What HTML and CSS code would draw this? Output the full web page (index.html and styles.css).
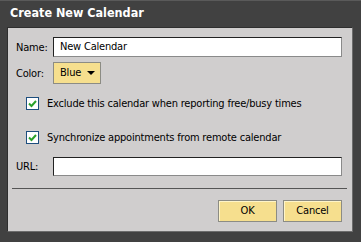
FILE: index.html
```html
<!DOCTYPE html>
<html>
	<head>
		<meta charset="UTF-8">
		<title>Create New Calendar</title>
		<link rel="stylesheet" href="styles.css">
	</head>
	<body>
		<div class="dialog">
			<div class="title">Create New Calendar</div>
			<div class="panel">
				<div class="row name-row">
					<label class="lbl">Name:</label>
					<div class="field">New Calendar</div>
				</div>
				<div class="row color-row">
					<label class="lbl">Color:</label>
					<div class="pick">Blue <span class="arrow"></span></div>
				</div>
				<div class="check first">
					<span class="box">
						<svg width="11" height="11" viewBox="0 0 11 11"><path d="M2 5.5 L4.5 8 L9 3" fill="none" stroke="#2aa12a" stroke-width="2"/></svg>
					</span>
					Exclude this calendar when reporting free/busy times
				</div>
				<div class="check second">
					<span class="box">
						<svg width="11" height="11" viewBox="0 0 11 11"><path d="M2 5.5 L4.5 8 L9 3" fill="none" stroke="#2aa12a" stroke-width="2"/></svg>
					</span>
					Synchronize appointments from remote calendar
				</div>
				<div class="row url-row">
					<label class="lbl">URL:</label>
					<div class="field"></div>
				</div>
				<div class="sep"></div>
				<div class="btns">
					<a href="javascript:;" class="btn">OK</a><a href="javascript:;" class="btn">Cancel</a>
				</div>
			</div>
		</div>
	</body>
</html>
```
FILE: styles.css
```css
body{
	margin: 0;
	padding: 0;
	background: #414141;
	font-family: "DejaVu Sans Condensed", "DejaVu Sans", sans-serif;
	font-stretch: condensed;
	font-size: 11px;
	letter-spacing: -0.2px;
	color: #000;
}
a{
	text-decoration: none;
	color: #000;
}
.dialog{
	width: 361px;
	height: 242px;
	box-sizing: border-box;
	border-top: 1px solid #5a5a5a;
	background: #414141;
}
.title{
	height: 26px;
	line-height: 24px;
	padding-left: 10px;
	color: #fff;
	font-weight: bold;
	font-size: 12.5px;
	letter-spacing: 0;
}
.panel{
	margin-left: 7px;
	width: 346px;
	height: 205px;
	box-sizing: border-box;
	background: #d0cece;
	border: 1px solid #2e2e2e;
	border-right-color: #6c6c6c;
	border-bottom-color: #6c6c6c;
	padding: 0 10px 0 0;
}
.row{
	display: flex;
	align-items: center;
}
.lbl{
	width: 37px;
	padding-left: 8px;
}
.field{
	flex: 1;
	height: 20px;
	line-height: 18px;
	box-sizing: border-box;
	background: #fff;
	border: 1px solid #222;
	border-right-color: #8a8a8a;
	border-bottom-color: #8a8a8a;
	padding-left: 6px;
}
.name-row{
	margin-top: 9px;
}
.color-row{
	margin-top: 5px;
}
.pick{
	width: 48px;
	height: 22px;
	line-height: 20px;
	box-sizing: border-box;
	background: #f6df8e;
	border: 1px solid #8c8c84;
	padding-left: 6px;
	display: flex;
	align-items: center;
	gap: 6px;
}
.arrow{
	width: 0;
	height: 0;
	border-left: 4px solid transparent;
	border-right: 4px solid transparent;
	border-top: 4px solid #000;
}
.check{
	display: flex;
	align-items: center;
	padding-left: 18px;
	gap: 8px;
	height: 13px;
}
.check.first{
	margin-top: 13px;
}
.check.second{
	margin-top: 21px;
}
.box{
	width: 13px;
	height: 13px;
	box-sizing: border-box;
	border: 1px solid #1d4e7e;
	background: #fff;
	display: flex;
	align-items: center;
	justify-content: center;
}
.url-row{
	margin-top: 13px;
}
.url-row .field{
	height: 19px;
}
.sep{
	margin: 12px -5px 0 4px;
	height: 1px;
	background: #555;
}
.btns{
	display: flex;
	justify-content: flex-end;
	gap: 6px;
	margin-top: 11px;
}
.btn{
	display: block;
	width: 59px;
	height: 22px;
	line-height: 20px;
	box-sizing: border-box;
	text-align: center;
	background: #f6df8e;
	border: 1px solid #8c8c84;
	box-shadow: inset 1px 1px 0 #fff5c8;
}
```
